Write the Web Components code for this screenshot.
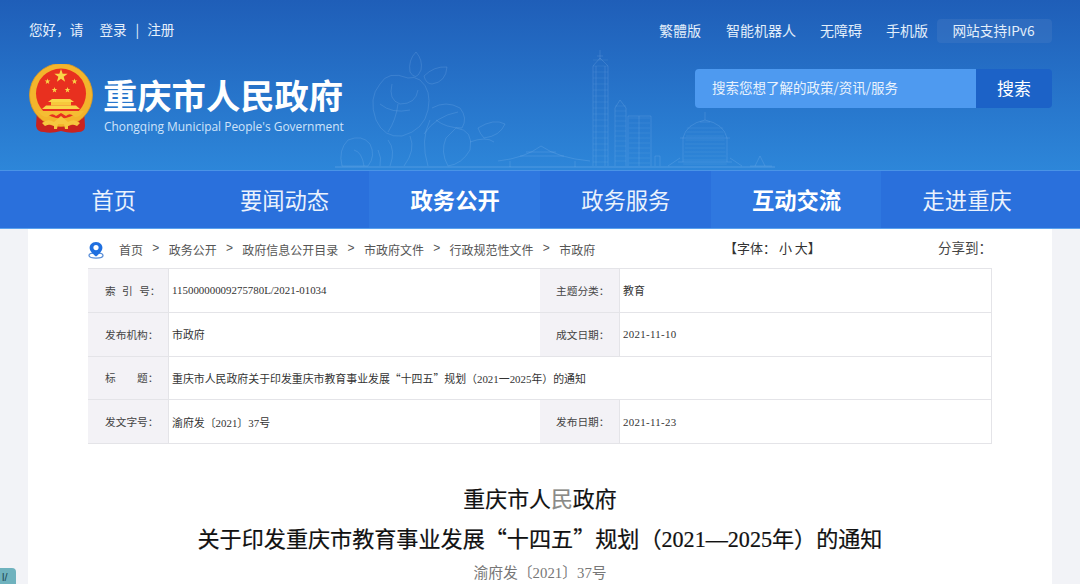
<!DOCTYPE html>
<html lang="zh-CN">
<head>
<meta charset="utf-8">
<title>重庆市人民政府</title>
<style>
  html, body { margin: 0; height: 584px; overflow: hidden; background: #f2f3f7; }
  body { font-family: "Noto Sans CJK SC", sans-serif; color: #333; position: relative; }
</style>
</head>
<body>
<gov-header></gov-header>
<gov-nav></gov-nav>
<gov-page>
  <gov-crumbs></gov-crumbs>
  <meta-table></meta-table>
  <doc-head></doc-head>
</gov-page>
<side-chip>l/</side-chip>

<script>
const CJK = '"Noto Sans CJK SC", sans-serif';
const QUOTES = `.qa, .qb { display: inline-block; width: 1em; font-family: ${CJK}; } .qa { text-align: right; } .qb { text-align: left; }`;

/* EMBLEM */
class GovEmblem extends HTMLElement {
  connectedCallback() {
    const star = (cx, cy, r) => {
      let pts = [];
      for (let i = 0; i < 10; i++) {
        const a = -Math.PI / 2 + i * Math.PI / 5;
        const d = i % 2 ? r * 0.4 : r;
        pts.push((cx + d * Math.cos(a)).toFixed(2) + "," + (cy + d * Math.sin(a)).toFixed(2));
      }
      return `<polygon points="${pts.join(" ")}" fill="#f9d648"/>`;
    };
    this.attachShadow({ mode: "open" }).innerHTML = `
      <style>:host { display: block; width: 66px; height: 70px; flex: none; margin-top: 1px; } svg { display: block; }</style>
      <svg width="66" height="70" viewBox="0 0 66 70">
        <path d="M9 46 L56 46 L57 62 Q57 68 50 68 Q43 70 33 67 Q23 70 16 68 Q9 68 8 62 Z" fill="#c9231f"/>
        <circle cx="33" cy="31" r="31.5" fill="#f3b52c"/>
        <circle cx="33" cy="31" r="31.5" fill="none" stroke="#e09a1e" stroke-width=".8"/>
        <circle cx="33" cy="29.5" r="25" fill="#e8301f"/>
        ${star(33, 12, 7)}${star(19.5, 17.5, 3)}${star(46.5, 17.5, 3)}${star(26.5, 26, 3)}${star(39.5, 26, 3)}
        <path d="M24 35 H42 L46 38 H20 Z" fill="#f9d648"/>
        <rect x="23" y="38" width="20" height="3.5" fill="#f7c83c"/>
        <path d="M14 45 L18 41.5 H48 L52 45 Z" fill="#f9d648"/>
        <path d="M10 47 H56 Q52 53 47 53 Q42 48 38 52 L33 49 L28 52 Q24 48 19 53 Q14 53 10 47 Z" fill="#f5bd33"/>
        <path d="M14 59 Q20 54 26 58 L33 52 L40 58 Q46 54 52 59 L49 62 Q44 59 40 62 L40 65 H37 L36 60 H30 L29 65 H26 L26 62 Q22 59 17 62 Z" fill="#f6c73f"/>
      </svg>`;
  }
}
customElements.define("gov-emblem", GovEmblem);

/* SKYLINE AND FLOWER BEHIND THE HEADER */
class GovSkyline extends HTMLElement {
  connectedCallback() {
    let floors = "";
    for (let y = 60; y < 165; y += 6) floors += `M593 ${y}H608`;
    for (let y = 106; y < 165; y += 5) floors += `M615 ${y}H626`;
    for (let y = 118; y < 165; y += 5) floors += `M629 ${y}H650`;
    for (let y = 128; y < 165; y += 4) floors += `M${683 + (165 - y) * 0.1} ${y}H${727 - (165 - y) * 0.1}`;
    this.attachShadow({ mode: "open" }).innerHTML = `
      <style>:host { position: absolute; left: 0; top: 0; width: 1080px; height: 170px; pointer-events: none; } svg { display: block; }</style>
      <svg width="1080" height="170" viewBox="0 0 1080 170" fill="none" stroke="#b9dcff" stroke-opacity=".15" stroke-width="1">
        <!-- flower -->
        <path d="M416 52 Q423 60 421 70 Q416 82 410 72 Q408 60 416 52 Z"/>
        <path d="M424 76 Q434 66 447 67 Q446 82 432 84 Q426 84 424 76 Z"/>
        <path d="M408 78 Q388 70 380 84 Q368 98 376 120 Q384 138 402 136 Q424 130 428 110 Q432 90 420 80 Q414 76 408 78 Z"/>
        <path d="M392 84 Q388 100 400 104 Q416 104 418 90 M380 104 Q392 114 410 110 M398 104 Q396 120 388 132"/>
        <path d="M432 108 Q446 100 460 108 Q468 118 462 128 Q446 128 436 120 M424 134 Q436 116 458 112"/>
        <path d="M410 136 Q416 150 404 166 M430 120 Q420 140 428 166"/>
        <path d="M456 128 Q474 130 470 150 Q462 164 448 166 Q440 152 446 138 Z"/>
        <path d="M348 140 Q362 134 370 144 Q376 156 368 166 H342 Q338 150 348 140 Z M354 150 Q362 152 364 166"/>
        <path d="M478 128 Q494 118 505 124 Q500 136 484 138 Q480 134 478 128 Z M470 142 Q486 136 494 142"/>
        <path d="M388 140 Q396 150 390 166 M378 150 Q382 158 380 166"/>
        <!-- pavilion -->
        <path d="M498 161 Q525 158 541 146 Q558 158 590 161 M510 161 V167 M575 161 V167 M520 156 H564 M526 152 H556"/>
        <!-- towers -->
        <path d="M600 50 V60 M597 56 H603 M593 166 V66 L600 58 L608 66 V166 M596 66 V166 M605 66 V166"/>
        <path d="M615 166 V108 L620 100 L626 108 V166 M628 166 V116 H651 V166 M639 116 V166"/>
        <path d="${floors}" stroke-opacity=".09"/>
        <path d="M655 166 V156 H660 V166"/>
        <!-- great hall -->
        <path d="M705 112 V120 M700 122 H710 M683 162 V138 Q686 124 705 120 Q724 124 727 138 V162 M678 162 H732 M680 138 H730 M668 166 L680 158 M742 166 L730 158"/>
        <path d="M755 166 L760 156 L765 166 M750 166 H772"/>
        <path d="M335 167 H775" stroke-opacity=".25"/>
      </svg>`;
  }
}
customElements.define("gov-skyline", GovSkyline);

/* HEADER */
class GovHeader extends HTMLElement {
  connectedCallback() {
    const links = ["繁體版", "智能机器人", "无障碍", "手机版"];
    this.attachShadow({ mode: "open" }).innerHTML = `
      <style>
        :host { display: block; position: relative; height: 170px; box-sizing: border-box; overflow: hidden;
          background: linear-gradient(#1f5eb8, #2d86d9); color: #fff; font-family: ${CJK}; }
        .top { display: flex; justify-content: space-between; align-items: center; padding: 19px 28px 0 29px; height: 24px; position: relative; }
        .hello { font-size: 13.6px; color: #e6f0fb; margin-top: -5px; display: flex; align-items: center; }
        .hello .login { margin-left: 16px; }
        .hello .bar { margin: 0 8px 0 9px; }
        .links { display: flex; align-items: center; font-size: 14px; color: #e3eefa; }
        .links a { margin-right: 24px; padding-bottom: 2px; }
        .links a:nth-child(1) { margin-right: 25px; }
        .links a:nth-child(4) { margin-right: 9px; }
        .ipv6 { height: 24px; width: 115px; box-sizing: border-box; display: flex; align-items: center; justify-content: center;
          border-radius: 4px; background: rgba(80, 130, 200, .3); font-size: 13.7px; padding: 0 2px 2px 0; }
        .main { display: flex; justify-content: space-between; padding: 20px 28px 0 28px; position: relative; }
        .brand { display: flex; gap: 9px; }
        .names { display: flex; flex-direction: column; margin-top: 8px; }
        .cn { font-size: 34.3px; font-weight: 700; line-height: 46px; white-space: nowrap; }
        .en { font-family: "Open Sans", sans-serif; font-size: 11.95px; line-height: 16px; color: #cfe3fa; margin-top: 2px; padding-left: 1px; white-space: nowrap; }
        .search { display: flex; height: 39px; margin-top: 6px; }
        .input { width: 281px; box-sizing: border-box; padding: 0 0 3px 17px; display: flex; align-items: center; font-size: 13.5px; color: #e9f2fd;
          background: #4e9af0; border-radius: 4px 0 0 4px; }
        .btn { width: 76px; padding-bottom: 3px; box-sizing: border-box; display: flex; align-items: center; justify-content: center; font-size: 17px; background: #1c62c7; border-radius: 0 4px 4px 0; }
      </style>
      <gov-skyline></gov-skyline>
      <div class="top">
        <div class="hello"><span>您好，请</span><span class="login">登录</span><span class="bar">|</span><span>注册</span></div>
        <div class="links">${links.map(l => `<a>${l}</a>`).join("")}<div class="ipv6">网站支持IPv6</div></div>
      </div>
      <div class="main">
        <div class="brand">
          <gov-emblem></gov-emblem>
          <div class="names">
            <div class="cn">重庆市人民政府</div>
            <div class="en">Chongqing Municipal People's Government</div>
          </div>
        </div>
        <div class="search">
          <div class="input">搜索您想了解的政策/资讯/服务</div>
          <div class="btn">搜索</div>
        </div>
      </div>`;
  }
}
customElements.define("gov-header", GovHeader);

/* NAV */
class GovNav extends HTMLElement {
  connectedCallback() {
    const itens = [
      { nome: "首页" }, { nome: "要闻动态" }, { nome: "政务公开", ativo: true },
      { nome: "政务服务" }, { nome: "互动交流", ativo: true }, { nome: "走进重庆" }
    ];
    this.attachShadow({ mode: "open" }).innerHTML = `
      <style>
        :host { display: block; height: 59px; box-sizing: border-box; background: #2a70dc; border-top: 1px solid #4a93e6; border-bottom: 1px solid #5aa2ee; font-family: ${CJK}; }
        nav { display: grid; grid-template-columns: repeat(6, 1fr); height: 100%; margin: 0 28px; }
        a { display: flex; align-items: center; justify-content: center; color: #eaf2fd; font-size: 22.3px; padding: 0 0 2px 1px; }
        a.on { background: #2f78e0; color: #fff; font-weight: 700; }
      </style>
      <nav>${itens.map(i => `<a class="${i.ativo ? "on" : ""}">${i.nome}</a>`).join("")}</nav>`;
  }
}
customElements.define("gov-nav", GovNav);

/* WHITE SHEET */
class GovPage extends HTMLElement {
  connectedCallback() {
    this.attachShadow({ mode: "open" }).innerHTML = `
      <style>:host { display: block; margin: 0 28px; padding: 0 60px; height: 355px; background: #fff; }</style>
      <slot></slot>`;
  }
}
customElements.define("gov-page", GovPage);

/* BREADCRUMB */
class GovCrumbs extends HTMLElement {
  connectedCallback() {
    const path = ["首页", "政务公开", "政府信息公开目录", "市政府文件", "行政规范性文件", "市政府"];
    this.attachShadow({ mode: "open" }).innerHTML = `
      <style>
        :host { display: flex; height: 39px; align-items: center; font-family: ${CJK}; font-size: 12px; color: #555; white-space: nowrap; }
        svg { flex: none; margin-right: 15px; margin-top: 3px; }
        .path { display: flex; flex: none; width: 475px; margin-top: 1px; }
        .sep { margin: 0 9.3px; font-family: "Liberation Sans", sans-serif; }
        .size { flex: none; width: 214px; font-size: 13px; color: #333; margin-left: 130px; margin-top: -3px; }
        .share { flex: none; font-size: 13.5px; color: #444; margin-top: -3px; }
      </style>
      <svg width="16" height="18" viewBox="0 0 16 18">
        <ellipse cx="8" cy="14.5" rx="7" ry="2.6" fill="none" stroke="#5b8fd8" stroke-width="1.3"/>
        <path d="M8 1 C3.6 1 1.6 4.2 1.6 6.8 C1.6 10.4 6 14 8 15.6 C10 14 14.4 10.4 14.4 6.8 C14.4 4.2 12.4 1 8 1 Z" fill="#1f6fe0"/>
        <circle cx="8" cy="6.6" r="2.6" fill="#fff"/>
      </svg>
      <div class="path">${path.map((p, i) => (i ? `<span class="sep">&gt;</span>` : "") + `<span>${p}</span>`).join("")}</div>
      <div class="size">【字体： 小 大】</div>
      <div class="share">分享到：</div>`;
  }
}
customElements.define("gov-crumbs", GovCrumbs);

/* TABLE */
class MetaTable extends HTMLElement {
  connectedCallback() {
    const linhas = [
      ["索 引 号：", "11500000009275780L/2021-01034", "主题分类：", "教育"],
      ["发布机构：", "市政府", "成文日期：", "<span class='d'>2021-11-10</span>"],
      ["标　　题：", "<span>重庆市人民政府关于印发重庆市教育事业发展<span class='qa'>“</span>十四五<span class='qb'>”</span>规划（2021一2025年）的通知</span>"],
      ["发文字号：", "渝府发〔2021〕37号", "发布日期：", "<span class='d'>2021-11-23</span>"]
    ];
    const celula = linha => {
      if (linha.length == 2) return `<div class="k">${linha[0]}</div><div class="v wide">${linha[1]}</div>`;
      return `<div class="k">${linha[0]}</div><div class="v">${linha[1]}</div><div class="k k2">${linha[2]}</div><div class="v">${linha[3]}</div>`;
    };
    this.attachShadow({ mode: "open" }).innerHTML = `
      <style>
        :host { display: block; font-size: 10.9px; color: #333; font-family: "Liberation Serif", ${CJK}; }
        .t { display: grid; grid-template-columns: 80px 372px 79px 373px; grid-auto-rows: 43.75px; border-top: 1px solid #e4e4e8; border-right: 1px solid #e4e4e8; box-sizing: border-box; width: 904px; }
        .k, .v { display: flex; align-items: center; border-bottom: 1px solid #e4e4e8; box-sizing: border-box; white-space: pre; }
        .k { background: #f3f2f6; padding-left: 17px; color: #444; font-family: ${CJK}; font-size: 10.7px; word-spacing: 4px; }
        .k2 { padding-left: 16px; }
        .v { padding-left: 3px; border-left: 1px solid #e4e4e8; }
        .wide { grid-column: 2 / 5; }
        .d { letter-spacing: .3px; }
        ${QUOTES}
      </style>
      <div class="t">${linhas.map(celula).join("")}</div>`;
  }
}
customElements.define("meta-table", MetaTable);

/* TITLE OF THE DOCUMENT */
class DocHead extends HTMLElement {
  connectedCallback() {
    this.attachShadow({ mode: "open" }).innerHTML = `
      <style>
        :host { display: block; text-align: center; font-family: "Liberation Serif", ${CJK}; color: #111; margin-top: 39px; }
        .l1 { font-size: 21.9px; line-height: 34px; -webkit-text-stroke: .2px; }
        .l1 i { font-style: normal; color: #8a8a86; }
        .l2 { font-size: 22.1px; line-height: 34px; margin-top: 3px; white-space: nowrap; -webkit-text-stroke: .2px; }
        .l3 { font-size: 14.8px; line-height: 22px; margin-top: 5px; color: #777; }
        ${QUOTES}
      </style>
      <div class="l1">重庆市人<i>民</i>政府</div>
      <div class="l2">关于印发重庆市教育事业发展<span class="qa">“</span>十四五<span class="qb">”</span>规划（2021—2025年）的通知</div>
      <div class="l3">渝府发〔2021〕37号</div>`;
  }
}
customElements.define("doc-head", DocHead);

/* CHIP IN THE CORNER */
class SideChip extends HTMLElement {
  connectedCallback() {
    this.attachShadow({ mode: "open" }).innerHTML = `
      <style>
        :host { position: absolute; left: 0; top: 568px; width: 16px; height: 16px; background: #6fb2be; border-radius: 0 4px 0 0;
          font-family: "Liberation Sans", sans-serif; font-size: 11px; color: #1d4a55; }
        div { padding: 3px 0 0 2px; white-space: nowrap; line-height: 13px; }
      </style>
      <div><slot></slot></div>`;
  }
}
customElements.define("side-chip", SideChip);
</script>
</body>
</html>
